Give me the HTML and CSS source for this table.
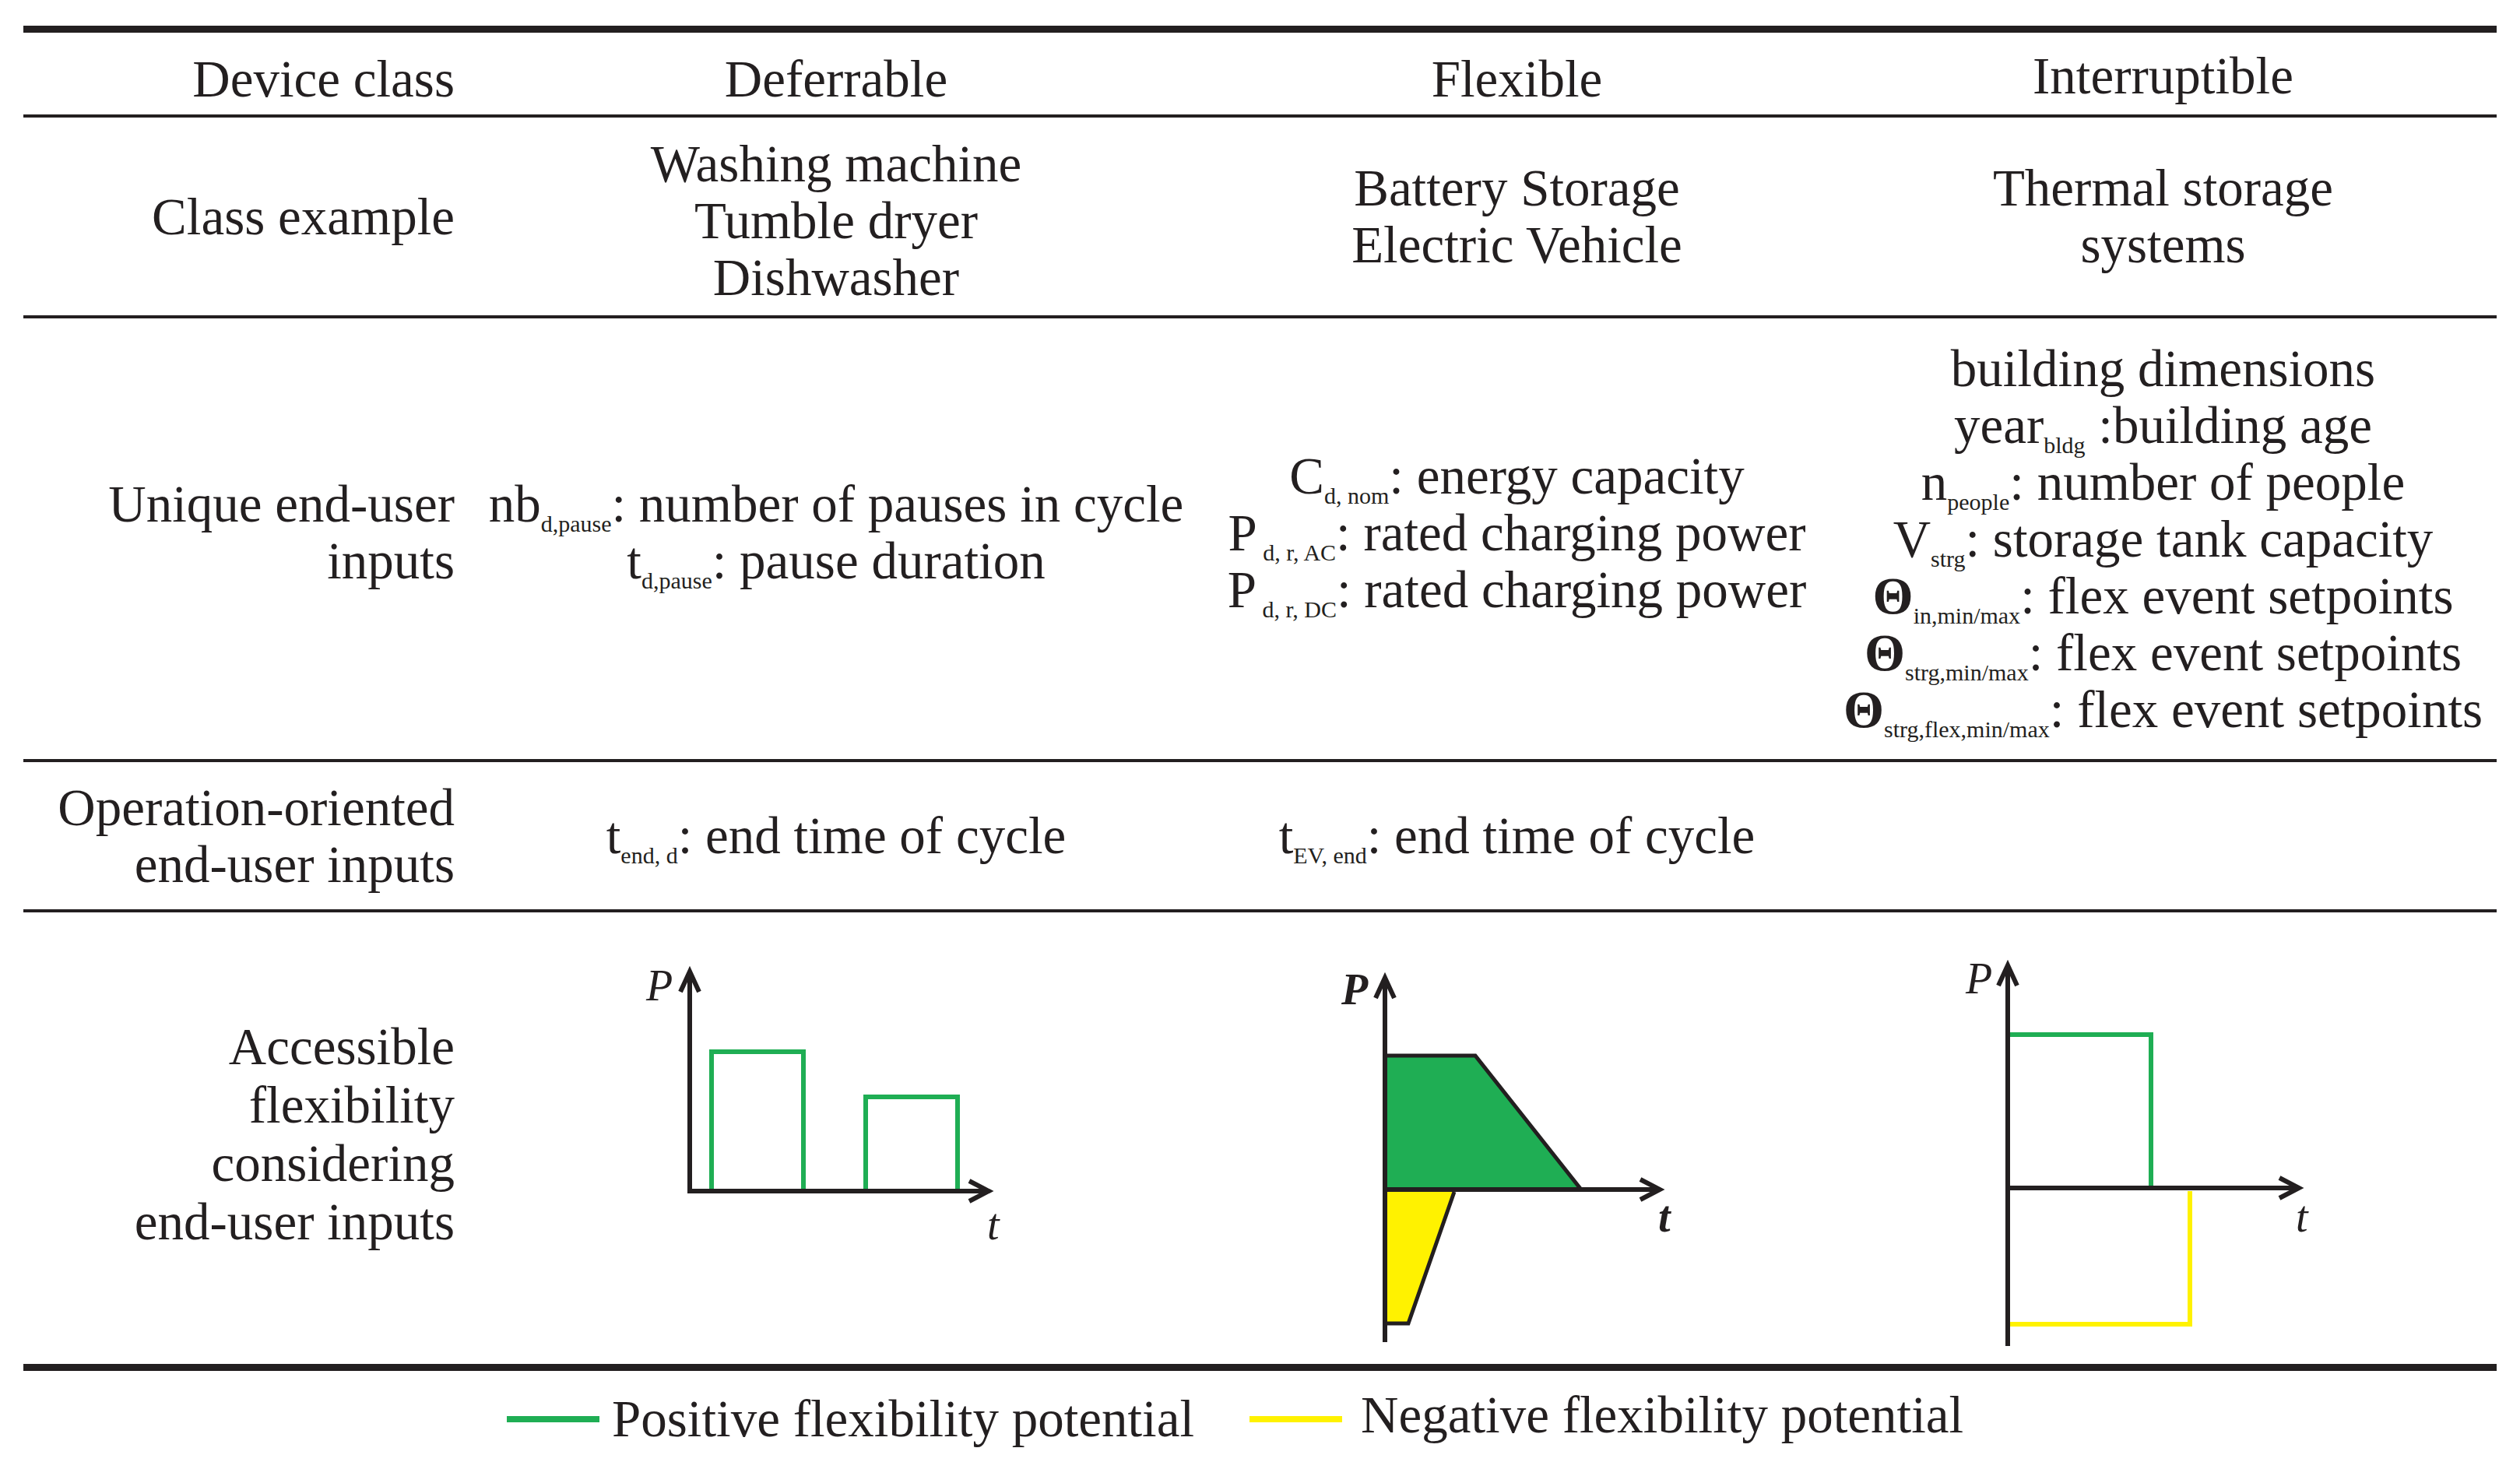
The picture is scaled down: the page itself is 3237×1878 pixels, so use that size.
FILE: index.html
```html
<!DOCTYPE html>
<html lang="en">
<head>
<meta charset="utf-8">
<title>Device classes and end-user inputs</title>
<link rel="stylesheet" href="styles.css">
</head>
<body>
<div class="page">
  <div class="table">
    <div class="row head">
      <div class="cell label"><div class="txt">Device class</div></div>
      <div class="cell"><div class="txt">Deferrable</div></div>
      <div class="cell"><div class="txt">Flexible</div></div>
      <div class="cell up"><div class="txt">Interruptible</div></div>
    </div>
    <div class="row examples">
      <div class="cell label"><div class="txt">Class example</div></div>
      <div class="cell down"><div class="txt">Washing machine<br>Tumble dryer<br>Dishwasher</div></div>
      <div class="cell"><div class="txt">Battery Storage<br>Electric Vehicle</div></div>
      <div class="cell"><div class="txt">Thermal storage<br>systems</div></div>
    </div>
    <div class="row unique">
      <div class="cell label lift"><div class="txt">Unique end-user<br>inputs</div></div>
      <div class="cell lift"><div class="txt">nb<sub class="s">d,pause</sub>: number of pauses in cycle<br>t<sub class="s">d,pause</sub>: pause duration</div></div>
      <div class="cell lift"><div class="txt">C<sub class="s">d, nom</sub>: energy capacity<br>P<sub class="s">&nbsp;d, r, AC</sub>: rated charging power<br>P<sub class="s">&nbsp;d, r, DC</sub>: rated charging power</div></div>
      <div class="cell"><div class="txt">building dimensions<br>year<sub class="s">bldg</sub> :building age<br>n<sub class="s">people</sub>: number of people<br>V<sub class="s">strg</sub>: storage tank capacity<br><span class="theta">Θ</span><sub class="s">in,min/max</sub>: flex event setpoints<br><span class="theta">Θ</span><sub class="s">strg,min/max</sub>: flex event setpoints<br><span class="theta">Θ</span><sub class="s">strg,flex,min/max</sub>: flex event setpoints</div></div>
    </div>
    <div class="row oper">
      <div class="cell label"><div class="txt">Operation-oriented<br>end-user inputs</div></div>
      <div class="cell"><div class="txt">t<sub class="s">end, d</sub>: end time of cycle</div></div>
      <div class="cell"><div class="txt">t<sub class="s">EV, end</sub>: end time of cycle</div></div>
      <div class="cell"></div>
    </div>
    <div class="row access">
      <div class="cell label tall"><div class="txt">Accessible<br>flexibility<br>considering<br>end-user inputs</div></div>
      <div class="cell chart">
        <svg class="plot" width="946" height="580" viewBox="0 0 946 580">
          <polyline class="pos" points="313,358 313,179 431,179 431,358"/>
          <polyline class="pos" points="511,358 511,237 629,237 629,358"/>
          <line class="axis" x1="285" y1="361" x2="285" y2="76"/>
          <line class="axis" x1="282" y1="358" x2="669" y2="358"/>
          <polyline class="arrow" points="273,102 285,76 297,102"/>
          <polyline class="arrow" points="644,345 669,358 644,371"/>
          <text class="lbl" x="229" y="113">P</text>
          <text class="lbl" x="667" y="420">t</text>
        </svg>
      </div>
      <div class="cell chart">
        <svg class="plot" width="803" height="580" viewBox="0 0 803 580">
          <polygon class="gfill" points="232,184 348,184 484,356 232,356"/>
          <polyline class="edge" points="232,184 348,184 484,356"/>
          <polygon class="yfill" points="232,359 321,359 262,528 232,528"/>
          <polyline class="edge" points="321,359 262,528 232,528"/>
          <line class="axis" x1="232" y1="552" x2="232" y2="84"/>
          <line class="axis" x1="229" y1="356" x2="585" y2="356"/>
          <polyline class="arrow" points="220,110 232,84 244,110"/>
          <polyline class="arrow" points="560,343 585,356 560,369"/>
          <text class="lbl bold" x="176" y="118">P</text>
          <text class="lbl bold" x="583" y="410">t</text>
        </svg>
      </div>
      <div class="cell chart">
        <svg class="plot" width="857" height="580" viewBox="0 0 857 580">
          <polyline class="pos" points="231,157 413,157 413,354"/>
          <polyline class="neg" points="463,358 463,529 231,529"/>
          <line class="axis" x1="229" y1="557" x2="229" y2="68"/>
          <line class="axis" x1="226" y1="354" x2="603" y2="354"/>
          <polyline class="arrow" points="217,94 229,68 241,94"/>
          <polyline class="arrow" points="578,341 603,354 578,367"/>
          <text class="lbl" x="175" y="104">P</text>
          <text class="lbl" x="599" y="410">t</text>
        </svg>
      </div>
    </div>
  </div>
  <div class="legend">
    <span class="key key-pos"></span>
    <span class="legend-text">Positive flexibility potential</span>
    <span class="key key-neg"></span>
    <span class="legend-text neg-text">Negative flexibility potential</span>
  </div>
</div>
</body>
</html>
```

FILE: styles.css
```css
html, body {
  margin: 0;
  padding: 0;
  background: #ffffff;
}

body {
  font-family: "Liberation Serif", "Times New Roman", serif;
  font-size: 67px;
  line-height: 73px;
  color: #231f20;
}

.page {
  padding: 33px 30px 0 30px;
  width: 3177px;
}

.table {
  border-top: 9px solid #231f20;
  border-bottom: 9px solid #231f20;
}

.row {
  display: grid;
  grid-template-columns: 571px 946px 803px 857px;
  border-bottom: 4px solid #231f20;
}

.row.access {
  border-bottom: none;
}

.head { height: 105px; }
.examples { height: 254px; }
.unique { height: 566px; }
.oper { height: 189px; }
.access { height: 580px; }

.cell {
  display: flex;
  align-items: center;
  justify-content: center;
  text-align: center;
  white-space: nowrap;
}

.cell.label {
  justify-content: flex-end;
  text-align: right;
  padding-right: 17px;
}

.head .cell {
  padding-top: 14px;
}

.head .cell.up {
  padding-top: 6px;
}

.cell.down {
  padding-top: 10px;
}

.cell.lift {
  padding-bottom: 16px;
}

.cell.tall {
  line-height: 75px;
  padding-bottom: 10px;
}

.cell.chart {
  display: block;
}

.s {
  font-size: 30px;
  vertical-align: -13px;
  line-height: 0;
}

.theta {
  font-weight: bold;
}

.plot {
  display: block;
}

.axis {
  stroke: #231f20;
  stroke-width: 6;
  fill: none;
}

.arrow {
  stroke: #231f20;
  stroke-width: 6;
  fill: none;
  stroke-linejoin: miter;
}

.pos {
  stroke: #1fae54;
  stroke-width: 6;
  fill: none;
}

.neg {
  stroke: #fff200;
  stroke-width: 6;
  fill: none;
}

.gfill {
  fill: #1fae54;
}

.yfill {
  fill: #fff200;
}

.edge {
  stroke: #231f20;
  stroke-width: 5;
  fill: none;
  stroke-linejoin: miter;
}

.lbl {
  font-family: "Liberation Serif", "Times New Roman", serif;
  font-style: italic;
  font-size: 56px;
  fill: #231f20;
}

.lbl.bold {
  font-weight: bold;
}

.legend {
  display: flex;
  align-items: center;
  margin-top: 25px;
  padding-left: 621px;
  height: 73px;
}

.key {
  display: block;
  width: 119px;
  height: 8px;
}

.key-pos {
  background: #1fae54;
  margin-right: 16px;
}

.key-neg {
  background: #fff200;
  margin-left: 71px;
  margin-right: 24px;
}

.neg-text {
  position: relative;
  top: -5px;
}
```
